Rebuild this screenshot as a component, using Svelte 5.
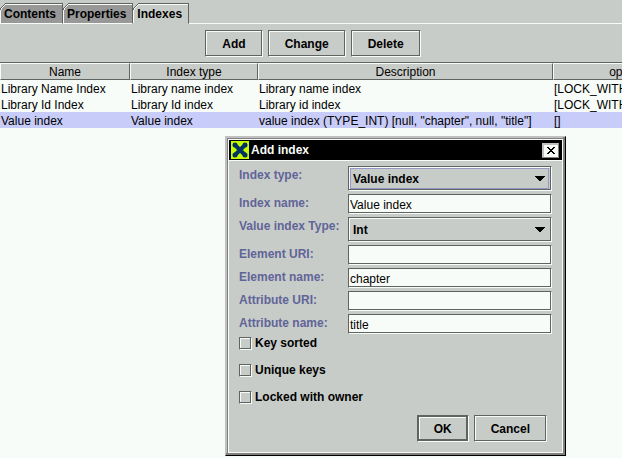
<script>
  let active = $state('Indexes');
  const tabs = ['Contents', 'Properties', 'Indexes'];
  const actions = ['Add', 'Change', 'Delete'];
  const columns = ['Name', 'Index type', 'Description', 'options'];
  const rows = [
    ['Library Name Index', 'Library name index', 'Library name index', '[LOCK_WITH_OWNER]'],
    ['Library Id Index', 'Library Id index', 'Library id index', '[LOCK_WITH_OWNER]'],
    ['Value index', 'Value index', 'value index (TYPE_INT) [null, "chapter", null, "title"]', '[]'],
  ];
  let selected = $state(2);
  const fields = [
    { id: 'kind', label: 'Index type:', options: ['Value index', 'Library name index', 'Library Id index'], focus: true },
    { id: 'name', label: 'Index name:', value: 'Value index' },
    { id: 'valueType', label: 'Value index Type:', options: ['Int', 'String'] },
    { id: 'elementUri', label: 'Element URI:', value: '' },
    { id: 'elementName', label: 'Element name:', value: 'chapter' },
    { id: 'attributeUri', label: 'Attribute URI:', value: '' },
    { id: 'attributeName', label: 'Attribute name:', value: 'title' },
  ];
  const checks = ['Key sorted', 'Unique keys', 'Locked with owner'];
</script>

<main>
  <div class="tabs" role="tablist">
    {#each tabs as tab}
      <button class="tab" class:active={tab === active} role="tab" aria-selected={tab === active} onclick={() => (active = tab)}>
        <svg class="corner" width="7" height="7" viewBox="0 0 7 7" shape-rendering="crispEdges" aria-hidden="true">
          <path d="M0 0h6v1h-1v1h-1v1h-1v1h-1v1h-1v1h-1z" fill="#c8ccc8" />
          <path d="M5 0h2v1h-2zM4 1h1v1h-1zM3 2h1v1h-1zM2 3h1v1h-1zM1 4h1v1h-1zM0 5h1v2h-1z" fill="#606460" />
          <path d="M5 1h2v1h-2zM4 2h1v1h-1zM3 3h1v1h-1zM2 4h1v1h-1zM1 5h1v2h-1z" fill="#f8fcf8" />
        </svg>
        {tab}
      </button>
    {/each}
    <span class="rule"></span>
  </div>

  <div class="toolbar">
    {#each actions as action}
      <button class="btn">{action}</button>
    {/each}
  </div>

  <div class="grid">
    <table>
      <colgroup><col class="c1" /><col class="c2" /><col class="c3" /><col class="c4" /></colgroup>
      <thead>
        <tr>{#each columns as column}<th scope="col">{column}</th>{/each}</tr>
      </thead>
      <tbody>
        {#each rows as row, i}
          <tr class:selected={i === selected} onclick={() => (selected = i)}>
            {#each row as cell}<td>{cell}</td>{/each}
          </tr>
        {/each}
      </tbody>
    </table>
  </div>

  <div class="dialog" role="dialog" aria-labelledby="dialog-title">
    <div class="inner">
      <header>
        <svg width="18" height="18" viewBox="0 0 18 18" aria-hidden="true">
          <rect width="18" height="18" fill="#c8fc00" />
          <path d="M4 4L14 14M14 4L4 14" stroke="#003464" stroke-width="4" stroke-linecap="round" />
          <circle cx="4" cy="4" r="2.5" fill="#003464" /><circle cx="14" cy="4" r="2.5" fill="#003464" />
          <circle cx="4" cy="14" r="2.5" fill="#003464" /><circle cx="14" cy="14" r="2.5" fill="#003464" />
        </svg>
        <h2 id="dialog-title">Add index</h2>
        <button class="close" aria-label="Close">
          <svg width="8" height="7" viewBox="0 0 8 7" shape-rendering="crispEdges" aria-hidden="true">
            <path d="M0 0h2v1h1v1h2v-1h1v-1h2v1h-1v1h-1v1h-1v1h1v1h1v1h1v1h-2v-1h-1v-1h-2v1h-1v1h-2v-1h1v-1h1v-1h1v-1h-1v-1h-1v-1h-1z" />
          </svg>
        </button>
      </header>
      <form onsubmit={(e) => e.preventDefault()}>
        <div class="fields">
          {#each fields as field}
            <label for={field.id}>{field.label}</label>
            {#if field.options}
              <div class="combo" class:focus={field.focus}>
                <select id={field.id}>
                  {#each field.options as option}<option>{option}</option>{/each}
                </select>
                <svg class="arrow" width="10" height="5" viewBox="0 0 10 5" shape-rendering="crispEdges" aria-hidden="true">
                  <path d="M0 0h10v1h-1v1h-1v1h-1v1h-1v1h-2v-1h-1v-1h-1v-1h-1v-1h-1z" />
                </svg>
              </div>
            {:else}
              <input id={field.id} type="text" value={field.value} />
            {/if}
          {/each}
        </div>
        <div class="checks">
          {#each checks as check}
            <label><input type="checkbox" />{check}</label>
          {/each}
        </div>
        <footer>
          <button class="btn default" type="submit">OK</button>
          <button class="btn" type="button">Cancel</button>
        </footer>
      </form>
    </div>
  </div>
</main>

<style>
  :global(body) { background: #f8fcf8; }
  main {
    --face: #c8ccc8;
    --light: #f8fcf8;
    --dark: #606460;
    position: relative;
    min-height: 100vh;
    overflow: hidden;
    background: var(--light);
    color: #000;
    font: 12px/16px "Liberation Sans", Arial, sans-serif;
  }
  * { box-sizing: border-box; }
  button, input, select { font: inherit; color: inherit; margin: 0; border-radius: 0; }

  .tabs { display: flex; align-items: stretch; height: 24px; padding-top: 3px; background: var(--face); }
  .tab {
    position: relative;
    padding: 1px 6px 0 4px;
    border: 0;
    border-top: 1px solid var(--dark);
    border-right: 1px solid var(--dark);
    border-bottom: 1px solid var(--light);
    background: #989898;
    box-shadow: inset 1px 1px var(--light);
    font-weight: bold;
  }
  .tab.active { background: var(--face); border-bottom-color: var(--face); }
  .corner { position: absolute; top: -1px; left: 0; }
  .rule { flex: 1; border-bottom: 1px solid var(--light); }

  .toolbar { display: flex; justify-content: center; gap: 5px; padding: 6px 0 5px 4px; background: var(--face); }
  .btn {
    height: 27px;
    padding: 0 16px;
    border: 1px solid;
    border-color: var(--dark) var(--light) var(--light) var(--dark);
    background: var(--face);
    box-shadow: inset -1px -1px var(--dark), inset 1px 1px var(--light);
    font-weight: bold;
  }

  .grid { overflow: hidden; border-top: 1px solid var(--dark); }
  table { width: 704px; table-layout: fixed; border-collapse: separate; border-spacing: 0; }
  .c1 { width: 130px; }
  .c2 { width: 128px; }
  .c3 { width: 295px; }
  th {
    height: 17px;
    padding: 2px 0 0;
    border: 1px solid;
    border-color: var(--light) var(--dark) var(--dark) var(--light);
    background: var(--face);
    font-weight: normal;
    line-height: 13px;
  }
  td { height: 16px; padding: 2px 1px 0; line-height: 14px; white-space: nowrap; overflow: hidden; }
  .selected { background: #c8ccf8; }

  .dialog {
    position: absolute;
    left: 225px;
    top: 136px;
    width: 341px;
    border: 1px solid;
    border-color: #c0c0c0 #000 #000 #c0c0c0;
    background: var(--face);
    box-shadow: inset -2px -2px #808080, inset 1px 1px #c0c0c0, inset 2px 2px #808080;
    padding: 2px;
  }
  .inner { border: 1px solid var(--light); }
  header { display: flex; align-items: center; gap: 2px; height: 21px; padding: 0 3px 0 2px; border-bottom: 1px solid var(--light); background: #000; }
  h2 { flex: 1; margin: 0; color: var(--light); font-size: 12px; }
  .close {
    display: grid;
    place-items: center;
    width: 17px;
    height: 15px;
    padding: 0;
    border: 1px solid;
    border-color: #c0c0c0 #808080 #808080 #c0c0c0;
    background: var(--light);
    box-shadow: inset 1px 1px #c0c0c0;
  }
  form { padding: 5px 10px 10px; }
  .fields { display: grid; grid-template-columns: 109px 1fr; row-gap: 3px; }
  .fields label { color: #606498; font-weight: bold; line-height: 18px; }
  .fields input {
    width: 100%;
    height: 20px;
    padding: 1px 1px 0;
    border: 1px solid;
    border-color: var(--dark) var(--light) var(--light) var(--dark);
    background: var(--light);
    box-shadow: inset -1px -1px var(--dark);
    outline: 0;
  }
  .combo {
    position: relative;
    height: 25px;
    padding: 1px 2px 2px 1px;
    border: 1px solid;
    border-color: var(--dark) var(--light) var(--light) var(--dark);
    box-shadow: inset -1px -1px var(--dark), inset 1px 1px var(--light);
  }
  select { appearance: none; width: 100%; height: 21px; padding: 0 2px; border: 1px solid transparent; background: none; font-weight: bold; outline: 0; }
  .focus select { border-color: #9898c8; }
  .arrow { position: absolute; right: 6px; top: 9px; pointer-events: none; }

  .checks { display: flex; flex-direction: column; gap: 11px; padding-top: 1px; }
  .checks label { display: flex; align-items: center; gap: 3px; font-weight: bold; }
  .checks input {
    appearance: none;
    width: 13px;
    height: 13px;
    border: 1px solid;
    border-color: var(--dark) var(--light) var(--light) var(--dark);
    box-shadow: inset -1px -1px var(--dark), inset 1px 1px var(--light);
  }
  footer { display: flex; justify-content: flex-end; gap: 5px; padding: 10px 5px 0 0; }
  .default { box-shadow: inset 1px 1px var(--dark), inset -2px -2px var(--dark), inset 2px 2px var(--light); }
</style>
